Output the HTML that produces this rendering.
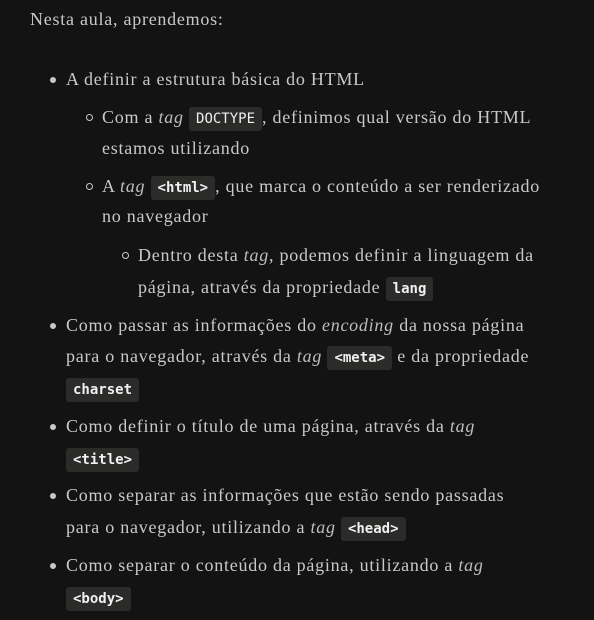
<!DOCTYPE html>
<html><head><meta charset="utf-8"><style>
body{margin:0;background:#131313;width:594px;height:620px;overflow:hidden;position:relative;font-family:"Liberation Serif",serif;font-size:18px;color:#c9c9c9;letter-spacing:0.75px}
.l{position:absolute;white-space:nowrap;line-height:30px;height:30px}
i{font-style:italic;color:#bdbdbd}
code{font-family:"DejaVu Sans Mono",monospace;font-size:14px;font-weight:bold;color:#f0f0f0;background:#2b2b2a;border-radius:3px;padding:4px 7px;letter-spacing:0}
code.n{font-weight:normal}
.d{position:absolute;width:6px;height:6px;border-radius:50%;background:#c9c9c9}
.c{position:absolute;width:5px;height:5px;border-radius:50%;border:1px solid #c9c9c9}
</style></head><body>
<div class="l" style="left:30px;top:4px">Nesta aula, aprendemos:</div>

<div class="d" style="left:50px;top:77px"></div>
<div class="l" style="left:66px;top:64px">A definir a estrutura básica do HTML</div>

<div class="c" style="left:86px;top:114px"></div>
<div class="l" style="left:102px;top:102px">Com a <i>tag</i> <code class="n">DOCTYPE</code>, definimos qual versão do HTML</div>
<div class="l" style="left:102px;top:133px">estamos utilizando</div>

<div class="c" style="left:86px;top:183px"></div>
<div class="l" style="left:102px;top:171px">A <i>tag</i> <code>&lt;html&gt;</code>, que marca o conteúdo a ser renderizado</div>
<div class="l" style="left:102px;top:201px">no navegador</div>

<div class="c" style="left:122px;top:252px"></div>
<div class="l" style="left:138px;top:240px">Dentro desta <i>tag</i>, podemos definir a linguagem da</div>
<div class="l" style="left:138px;top:272px">página, através da propriedade <code>lang</code></div>

<div class="d" style="left:50px;top:323px"></div>
<div class="l" style="left:66px;top:310px">Como passar as informações do <i>encoding</i> da nossa página</div>
<div class="l" style="left:66px;top:341px">para o navegador, através da <i>tag</i> <code>&lt;meta&gt;</code> e da propriedade</div>
<div class="l" style="left:66px;top:373px"><code>charset</code></div>

<div class="d" style="left:50px;top:424px"></div>
<div class="l" style="left:66px;top:411px">Como definir o título de uma página, através da <i>tag</i></div>
<div class="l" style="left:66px;top:443px"><code>&lt;title&gt;</code></div>

<div class="d" style="left:50px;top:493px"></div>
<div class="l" style="left:66px;top:480px">Como separar as informações que estão sendo passadas</div>
<div class="l" style="left:66px;top:512px">para o navegador, utilizando a <i>tag</i> <code>&lt;head&gt;</code></div>

<div class="d" style="left:50px;top:563px"></div>
<div class="l" style="left:66px;top:550px">Como separar o conteúdo da página, utilizando a <i>tag</i></div>
<div class="l" style="left:66px;top:582px"><code>&lt;body&gt;</code></div>
</body></html>
